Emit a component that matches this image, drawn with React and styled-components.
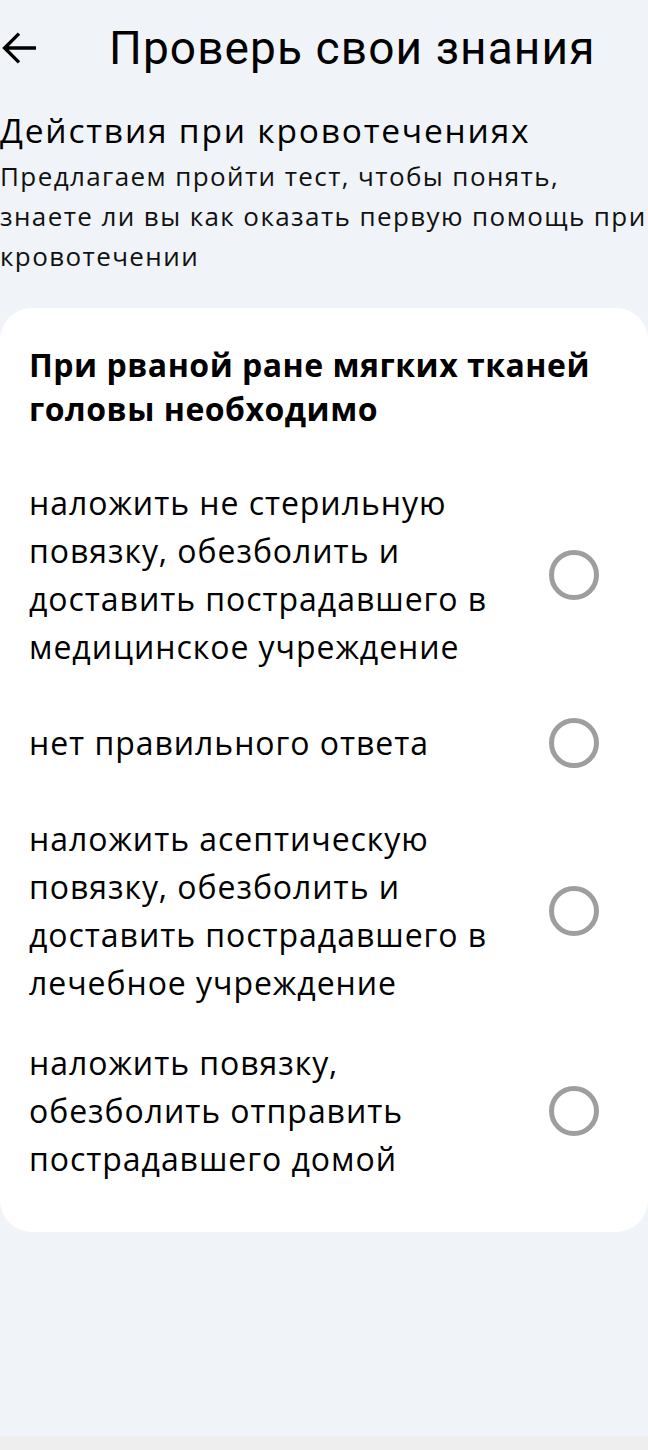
import React from "react";
import styled, { createGlobalStyle } from "styled-components";

const GlobalStyle = createGlobalStyle`
  * { box-sizing: border-box; }
  html, body { margin: 0; padding: 0; background: #f0f4f8; }
  body { overflow-x: hidden; }
`;

const Page = styled.div`
  min-height: 100vh;
  display: flex;
  flex-direction: column;
  background: #f0f4f8;
  color: #000;
  font-family: "Open Sans", "Noto Sans", sans-serif;
  overflow-x: hidden;
`;

const Header = styled.header`
  height: 96px;
  display: flex;
  align-items: center;
`;

const BackButton = styled.button`
  width: 48px;
  height: 48px;
  margin-left: -4px;
  padding: 0;
  border: 0;
  background: transparent;
  display: flex;
  align-items: center;
  justify-content: center;
  cursor: pointer;
`;

const Title = styled.h1`
  margin: 0 0 0 65px;
  font-family: Roboto, "Liberation Sans", sans-serif;
  font-weight: 400;
  font-size: 46px;
  line-height: 54px;
  letter-spacing: 1.1px;
  color: #000;
  white-space: nowrap;
`;

const Intro = styled.section`
  margin-top: 12px;
  display: flex;
  flex-direction: column;
  gap: 4px;
`;

const Subtitle = styled.h2`
  margin: 0;
  font-weight: 400;
  font-size: 33.5px;
  line-height: 44px;
  letter-spacing: 1.8px;
  color: #000;
`;

const Description = styled.p`
  margin: 0 -12px 0 0;
  font-size: 26px;
  line-height: 40px;
  letter-spacing: 1.4px;
  color: #111;
`;

const Card = styled.div`
  margin-top: 32px;
  background: #fff;
  border-radius: 32px;
  padding: 35px 34px 49px 29px;
`;

const Question = styled.h3`
  margin: 0;
  font-weight: 700;
  font-size: 32px;
  line-height: 44px;
  letter-spacing: 0.5px;
  color: #000;
`;

const Options = styled.div`
  margin-top: 48px;
  display: flex;
  flex-direction: column;
  gap: 32px;
`;

const OptionRow = styled.label`
  display: flex;
  align-items: center;
  gap: 24px;
  cursor: pointer;
`;

const OptionText = styled.span`
  flex: 1;
  font-size: 32px;
  line-height: 48px;
  letter-spacing: 0.95px;
  color: #000;
`;

const RadioBox = styled.span`
  flex: none;
  width: 80px;
  height: 80px;
  display: flex;
  align-items: center;
  justify-content: center;
`;

const RadioCircle = styled.span`
  width: 50px;
  height: 50px;
  border-radius: 50%;
  border: 5px solid ${(p) => (p.$checked ? "#1976d2" : "#9e9e9e")};
`;

const Spacer = styled.div`
  flex: 1;
`;

const BottomBar = styled.div`
  height: 14px;
  background: #eeeeee;
`;

const ArrowIcon = () => (
  <svg width="48" height="48" viewBox="0 0 24 24" fill="none">
    <path
      d="M20 12H4.9M11.5 4.8L4.3 12l7.2 7.2"
      stroke="#000"
      strokeWidth="1.7"
      strokeLinecap="butt"
      strokeLinejoin="miter"
    />
  </svg>
);

const options = [
  "наложить не стерильную повязку, обезболить и доставить пострадавшего в медицинское учреждение",
  "нет правильного ответа",
  "наложить асептическую повязку, обезболить и доставить пострадавшего в лечебное учреждение",
  "наложить повязку, обезболить отправить пострадавшего домой",
];

export default function App() {
  const [selected, setSelected] = React.useState(null);
  return (
    <>
      <GlobalStyle />
      <Page>
        <Header>
          <BackButton aria-label="Назад">
            <ArrowIcon />
          </BackButton>
          <Title>Проверь свои знания</Title>
        </Header>
        <Intro>
          <Subtitle>Действия при кровотечениях</Subtitle>
          <Description>
            Предлагаем пройти тест, чтобы понять, знаете ли вы как оказать первую помощь при кровотечении
          </Description>
        </Intro>
        <Card>
          <Question>При рваной ране мягких тканей головы необходимо</Question>
          <Options>
            {options.map((o, i) => (
              <OptionRow key={i} onClick={() => setSelected(i)}>
                <OptionText>{o}</OptionText>
                <RadioBox>
                  <RadioCircle $checked={selected === i} />
                </RadioBox>
              </OptionRow>
            ))}
          </Options>
        </Card>
        <Spacer />
        <BottomBar />
      </Page>
    </>
  );
}
